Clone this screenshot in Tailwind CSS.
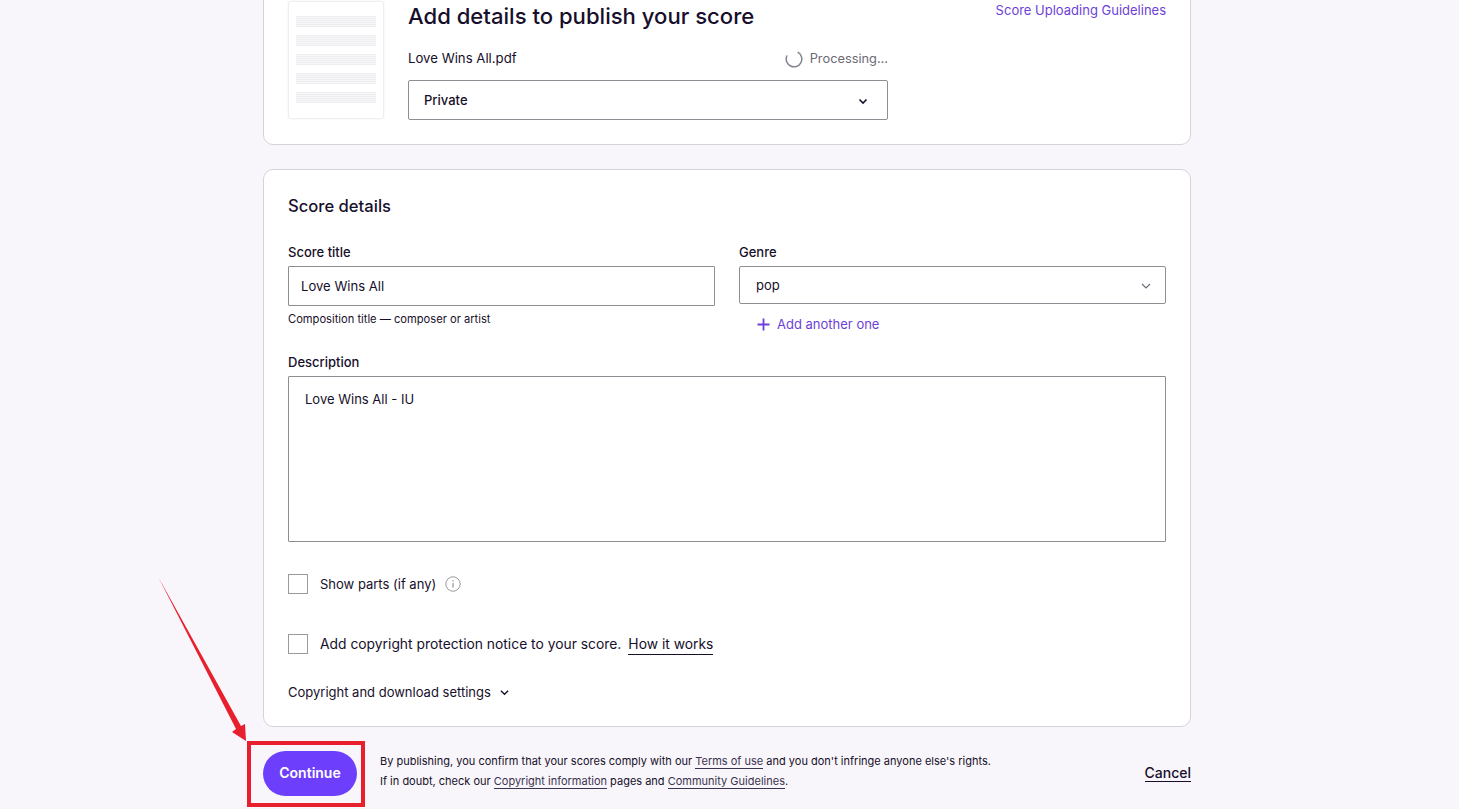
<!DOCTYPE html>
<html lang="en">
<head>
	<meta charset="UTF-8">
	<title>Add details to publish your score</title>
	<script src="https://cdn.jsdelivr.net/npm/@tailwindcss/browser@4"></script>
</head>

<body class="relative h-[809px] overflow-hidden bg-[#f8f6fa] font-['Inter',sans-serif] text-[#170f2b]">
	<div class="mt-[-24px] ml-[263px] flex w-[928px] flex-col">

		<!-- upload card -->
		<div class="flex h-[169px] rounded-b-[10px] border border-[#d4d3d8] bg-white pt-[24px] pl-[24px] pr-[24px]">
			<div class="flex h-[118px] w-[96px] shrink-0 flex-col gap-[8px] rounded-[3px] border border-[#eeedf1] px-[7px] pt-[14px] shadow-[0_0_2px_#ecebf0]">
				<div class="h-[11px] bg-[repeating-linear-gradient(#eeeef1_0,#eeeef1_1px,#f7f7f9_1px,#f7f7f9_2px)]"></div>
				<div class="h-[11px] bg-[repeating-linear-gradient(#eeeef1_0,#eeeef1_1px,#f7f7f9_1px,#f7f7f9_2px)]"></div>
				<div class="h-[11px] bg-[repeating-linear-gradient(#eeeef1_0,#eeeef1_1px,#f7f7f9_1px,#f7f7f9_2px)]"></div>
				<div class="h-[11px] bg-[repeating-linear-gradient(#eeeef1_0,#eeeef1_1px,#f7f7f9_1px,#f7f7f9_2px)]"></div>
				<div class="h-[11px] bg-[repeating-linear-gradient(#eeeef1_0,#eeeef1_1px,#f7f7f9_1px,#f7f7f9_2px)]"></div>
			</div>
			<div class="ml-[24px] flex w-[480px] shrink-0 flex-col">
				<h1 class="text-[22.1px] leading-[30px] font-medium">Add details to publish your score</h1>
				<div class="mt-[16px] flex h-[24px] items-center justify-between">
					<span class="text-[13.2px]">Love Wins All.pdf</span>
					<span class="flex items-center gap-[7px] text-[12.8px] text-[#6c6a75]">
						<svg class="h-[18px] w-[18px]" viewBox="0 0 18 18" fill="none"><path d="M13.2 2.4A7.8 7.8 0 1 1 1.8 6" stroke="#85838d" stroke-width="1.5" stroke-linecap="round"/></svg>
						Processing...
					</span>
				</div>
				<div class="mt-[9px] flex h-[40px] items-center justify-between rounded-[2px] border border-[#8e8d93] pt-[1px] px-[15px] text-[13px] font-medium">
					<span>Private</span>
					<svg class="mr-[4px] h-[10px] w-[10px]" viewBox="0 0 10 10" fill="none"><path d="M1.5 3.5 5 7l3.5-3.5" stroke="#170f2b" stroke-width="1.6"/></svg>
				</div>
			</div>
			<a class="ml-auto text-[13px] leading-[18px] text-[#6d3fd8]">Score Uploading Guidelines</a>
		</div>

		<!-- score details card -->
		<div class="mt-[24px] flex h-[558px] flex-col rounded-[10px] border border-[#d4d3d8] bg-white px-[24px] pt-[24px]">
			<h2 class="text-[16.6px] leading-[24px] font-medium">Score details</h2>

			<div class="mt-[26px] grid grid-cols-2 gap-x-[24px]">
				<div>
					<div class="text-[13px] leading-[16px] font-medium">Score title</div>
					<div class="mt-[6px] flex h-[40px] items-center rounded-[1px] border border-[#8e8d93] pt-[1px] px-[12px] text-[13.1px]">Love Wins All</div>
					<div class="mt-[6px] text-[11.15px] leading-[14px]">Composition title — composer or artist</div>
				</div>
				<div>
					<div class="text-[13px] leading-[16px] font-medium">Genre</div>
					<div class="mt-[6px] flex h-[38px] items-center justify-between rounded-[2px] border border-[#8e8d93] pt-[1px] pl-[16px] pr-[14px] text-[13px]">
						<span>pop</span>
						<svg class="h-[10px] w-[10px]" viewBox="0 0 10 10" fill="none"><path d="M1 3l4 4 4-4" stroke="#6c6a75" stroke-width="1.1"/></svg>
					</div>
					<div class="mt-[11px] flex items-center gap-[7px] pl-[18px] text-[13px] leading-[18px] text-[#6d3fd8]">
						<svg class="h-[13px] w-[13px]" viewBox="0 0 13 13" fill="none"><path d="M6.5 0.5v12M0.5 6.5h12" stroke="#6d3fd8" stroke-width="1.8"/></svg>
						Add another one
					</div>
				</div>
			</div>

			<div class="mt-[21px] text-[13px] leading-[16px] font-medium">Description</div>
			<div class="mt-[6px] h-[166px] rounded-[1px] border border-[#8e8d93] px-[16px] py-[13px] text-[13px] leading-[18px]">Love Wins All - IU</div>

			<div class="mt-[32px] flex h-[20px] items-center text-[13px]">
				<span class="h-[20px] w-[20px] border border-[#9a999f]"></span>
				<span class="ml-[12px] pt-[1px]">Show parts (if any)</span>
				<svg class="ml-[9px] h-[16px] w-[16px]" viewBox="0 0 16 16" fill="none"><circle cx="8" cy="8" r="7.2" stroke="#9a999f"/><path d="M8 7v4.5M8 4.2v1.3" stroke="#85838d" stroke-width="1.1"/></svg>
			</div>

			<div class="mt-[40px] flex h-[20px] items-center text-[13.85px]">
				<span class="h-[20px] w-[20px] border border-[#9a999f]"></span>
				<span class="ml-[12px]">Add copyright protection notice to your score.</span>
				<a class="mt-[1px] ml-[7px] border-b border-[#170f2b] leading-[19px]">How it works</a>
			</div>

			<div class="mt-[29px] flex items-center text-[13px] leading-[18px]">
				Copyright and download settings
				<svg class="ml-[9px] h-[9px] w-[9px]" viewBox="0 0 10 10" fill="none"><path d="M1 3l4 4 4-4" stroke="#170f2b" stroke-width="1.5"/></svg>
			</div>
		</div>

		<!-- footer -->
		<div class="mt-[24px] flex items-start">
			<button class="h-[45px] w-[94px] shrink-0 rounded-full bg-[#6d3ffc] pb-[2px] text-[14px] font-semibold text-white">Continue</button>
			<div class="ml-[23px] text-[11px] leading-[20px]">
				<p>By publishing, you confirm that your scores comply with our <a class="border-b border-[#3b3350] text-[#3b3350]">Terms of use</a> and you don't infringe anyone else's rights.</p>
				<p>If in doubt, check our <a class="border-b border-[#3b3350] text-[#3b3350]">Copyright information</a> pages and <a class="border-b border-[#3b3350] text-[#3b3350]">Community Guidelines</a>.</p>
			</div>
			<a class="mt-[13px] ml-auto border-b border-[#170f2b] text-[14px] leading-[17px] font-medium">Cancel</a>
		</div>
	</div>

	<!-- red annotation over the page -->
	<div class="absolute top-[741px] left-[247px] h-[66px] w-[118px] border-[4px] border-[#e8202e]"></div>
	<svg class="absolute top-0 left-0 h-[809px] w-[1459px]" viewBox="0 0 1459 809" fill="none">
		<path d="M158.5 577.5 241 726 245 724 246 741 232 732 236 729Z" fill="#e8202e"/>
	</svg>
</body>

</html>
